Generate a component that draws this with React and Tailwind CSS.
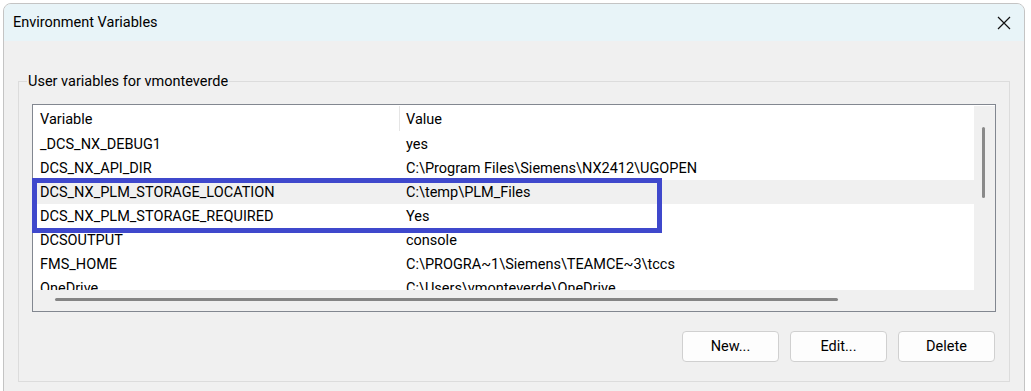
import React from "react";

const rows = [
  { name: "_DCS_NX_DEBUG1", value: "yes" },
  { name: "DCS_NX_API_DIR", value: "C:\\Program Files\\Siemens\\NX2412\\UGOPEN" },
  { name: "DCS_NX_PLM_STORAGE_LOCATION", value: "C:\\temp\\PLM_Files", selected: true },
  { name: "DCS_NX_PLM_STORAGE_REQUIRED", value: "Yes" },
  { name: "DCSOUTPUT", value: "console" },
  { name: "FMS_HOME", value: "C:\\PROGRA~1\\Siemens\\TEAMCE~3\\tccs" },
  { name: "OneDrive", value: "C:\\Users\\vmonteverde\\OneDrive" },
];

const Button = ({ children }) => (
  <button className="w-[97px] h-[31px] rounded-[4px] border border-[#d0d0d0] bg-[#fdfdfd] text-[14.5px] text-black pt-[1px]">
    {children}
  </button>
);

const App = () => {
  return (
    <div
      className="w-[1031px] h-[391px] bg-white overflow-hidden pt-[3px] pl-[3px] pr-[6px]"
      style={{ fontFamily: 'Roboto, "Liberation Sans", Arial, sans-serif' }}
    >
      <div className="h-[400px] rounded-t-[8px] border border-[#c4c4c4] bg-[#f0f0f0] overflow-hidden">
        {/* title bar */}
        <div className="h-[37px] bg-[#e8f4f8] flex items-center justify-between pl-[9px] pr-[12px] pt-[1px]">
          <span className="text-[14.5px] text-black">Environment Variables</span>
          <svg width="14" height="14" viewBox="0 0 14 14" className="mr-[1px]">
            <path d="M1 1 L13 13 M13 1 L1 13" stroke="#111" strokeWidth="1.2" />
          </svg>
        </div>

        {/* body */}
        <div className="pl-[14px] pr-[14px] pt-[40px]">
          <div className="relative h-[301px] border border-[#dcdcdc] px-[13px] pt-[22px]">
            <span className="absolute left-[8px] top-[-9px] bg-[#f0f0f0] px-[1px] text-[14.5px] leading-[18px] text-black">
              User variables for vmonteverde
            </span>

            {/* list */}
            <div className="relative h-[208px] border border-[#828790] bg-white flex flex-col">
              <div className="flex flex-1 min-h-0">
                <div className="flex-1 min-w-0 overflow-hidden">
                  <div className="h-[27px] flex items-center text-[14.5px] text-black">
                    <div className="w-[366px] pl-[7px] pt-[2px] h-full flex items-center">Variable</div>
                    <div className="border-l border-[#e5e5e5] h-[25px] self-start mt-[1px]" />
                    <div className="pl-[6px] pt-[2px]">Value</div>
                  </div>
                  {rows.map((r) => (
                    <div
                      key={r.name}
                      className={`h-[24px] flex items-center pt-[2px] text-[14.5px] text-black whitespace-nowrap ${
                        r.selected ? "bg-[#f0f0f0]" : ""
                      }`}
                    >
                      <div className="w-[367px] pl-[7px]">{r.name}</div>
                      <div className="pl-[6px]">{r.value}</div>
                    </div>
                  ))}
                </div>
                {/* vertical scrollbar */}
                <div className="w-[21px] mt-[1px] bg-[#f0f0f0] flex justify-center">
                  <div className="w-[3px] h-[71px] mt-[21px] ml-[-3px] rounded-full bg-[#8a8a8a]" />
                </div>
              </div>
              {/* horizontal scrollbar */}
              <div className="h-[21px] bg-[#f0f0f0] pl-[22px] pt-[8px]">
                <div className="w-[783px] h-[3px] rounded-full bg-[#858585]" />
              </div>

              {/* highlight box */}
              <div className="absolute left-[-1px] top-[73px] w-[630px] h-[55px] border-[5px] border-[#3f48cc]" />
            </div>

            {/* buttons */}
            <div className="flex justify-end gap-[11px] mt-[19px] pr-[1px]">
              <Button>New...</Button>
              <Button>Edit...</Button>
              <Button>Delete</Button>
            </div>
          </div>
        </div>
      </div>
    </div>
  );
};

export default App;
